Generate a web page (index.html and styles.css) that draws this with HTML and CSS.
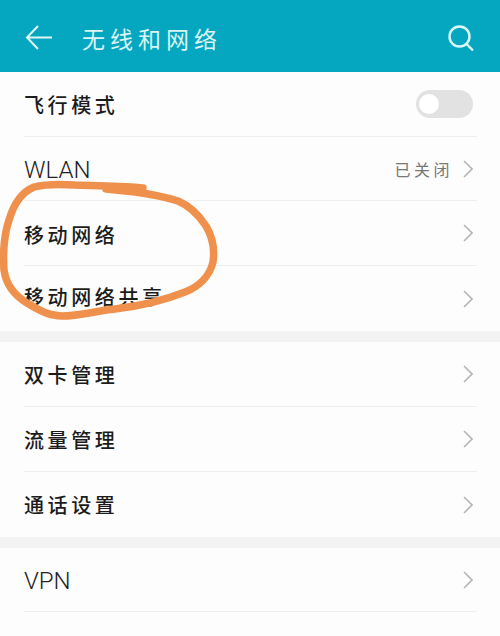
FILE: index.html
```html
<!DOCTYPE html>
<html lang="zh">
<head>
  <meta charset="UTF-8" />
  <title>无线和网络</title>
  <link rel="stylesheet" href="styles.css">
</head>
<body>
  <div class="header">
    <svg class="back-icon" width="28" height="28" viewBox="0 0 28 28">
      <path d="M13 2 L2 13.5 L13 25 M2 13.5 H27" />
    </svg>
    <div class="title">无线和网络</div>
    <svg class="search-icon" width="28" height="28" viewBox="0 0 28 28">
      <circle cx="12.5" cy="12.5" r="10" />
      <path d="M19.5 20 L26 26.5" />
    </svg>
  </div>

  <div class="group">
    <div class="row">
      <span class="label">飞行模式</span>
      <div class="toggle"><div class="knob"></div></div>
    </div>
    <div class="row tight">
      <span class="label latin">WLAN</span>
      <span class="value">已关闭</span>
      <svg class="chevron" width="10" height="18" viewBox="0 0 10 18"><path d="M1 1 L9 9 L1 17" /></svg>
    </div>
    <div class="row">
      <span class="label low">移动网络</span>
      <svg class="chevron" width="10" height="18" viewBox="0 0 10 18"><path d="M1 1 L9 9 L1 17" /></svg>
    </div>
    <div class="row">
      <span class="label high">移动网络共享</span>
      <svg class="chevron" width="10" height="18" viewBox="0 0 10 18"><path d="M1 1 L9 9 L1 17" /></svg>
    </div>
  </div>

  <div class="group">
    <div class="row">
      <span class="label">双卡管理</span>
      <svg class="chevron" width="10" height="18" viewBox="0 0 10 18"><path d="M1 1 L9 9 L1 17" /></svg>
    </div>
    <div class="row">
      <span class="label">流量管理</span>
      <svg class="chevron" width="10" height="18" viewBox="0 0 10 18"><path d="M1 1 L9 9 L1 17" /></svg>
    </div>
    <div class="row">
      <span class="label">通话设置</span>
      <svg class="chevron" width="10" height="18" viewBox="0 0 10 18"><path d="M1 1 L9 9 L1 17" /></svg>
    </div>
  </div>

  <div class="group last">
    <div class="row">
      <span class="label latin">VPN</span>
      <svg class="chevron" width="10" height="18" viewBox="0 0 10 18"><path d="M1 1 L9 9 L1 17" /></svg>
    </div>
  </div>

  <!-- hand drawn circle on top of the screenshot -->
  <svg class="scribble" width="500" height="636" viewBox="0 0 500 636">
    <path d="M143 188 C125 186 100 186 75 185 C60 184 45 184 34 187 C22 192 14 203 9 220 C4 235 3 255 4 270 C6 285 14 295 27 303 C40 311 50 316 62 316 C80 316 95 311 115 309 C140 306 165 300 185 292 C200 286 210 275 213 262 C215 248 212 236 206 226 C198 214 190 206 178 201 C165 197 150 194 135 192 L106 189" />
  </svg>
</body>
</html>
```

FILE: styles.css
```css
body, html {
  margin: 0;
  padding: 0;
  font-family: "Noto Sans CJK SC", "Liberation Sans", sans-serif;
  background: #fdfdfd;
}
body {
  position: relative;
  height: 636px;
  overflow: hidden;
}
.header {
  height: 72px;
  background: #05a7c0;
  box-sizing: border-box;
  display: flex;
  align-items: center;
  padding: 3px 25px 0 25px;
}
.back-icon path {
  fill: none;
  stroke: #e2f6f6;
  stroke-width: 2;
}
.title {
  flex: 1;
  margin-left: 29px;
  color: #d9f5f5;
  font-size: 23px;
  letter-spacing: 5px;
}
.search-icon circle, .search-icon path {
  fill: none;
  stroke: #dcf9f9;
  stroke-width: 2.4;
}
.group {
  border-bottom: 11px solid #f3f3f3;
}
.group.last {
  border-bottom: none;
}
.row {
  height: 64px;
  margin: 0 23px 0 24px;
  display: flex;
  align-items: center;
  border-bottom: 1px solid #eeeeee;
  padding-right: 4px;
}
.row.tight {
  height: 63px;
}
.group .row:last-child {
  border-bottom: none;
  height: 65px;
}
.group.last .row:last-child {
  border-bottom: 1px solid #eeeeee;
  height: 63px;
}
.label {
  flex: 1;
  font-size: 20px;
  font-weight: 500;
  letter-spacing: 3.6px;
  color: #1c1c1c;
}
.label.low {
  margin-top: 3px;
}
.label.high {
  margin-bottom: 4px;
}
.label.latin {
  font-family: Roboto, "Liberation Sans", sans-serif;
  font-size: 24px;
  font-weight: 300;
  letter-spacing: 0;
  color: #222222;
  margin-top: 2px;
}
.value {
  font-size: 16px;
  letter-spacing: 3.5px;
  color: #777777;
  margin-right: 10px;
}
.chevron path {
  fill: none;
  stroke: #b5b5b5;
  stroke-width: 1.6;
}
.toggle {
  width: 57px;
  height: 28px;
  border-radius: 14px;
  background: #e2e2e2;
  display: flex;
  align-items: center;
  padding-left: 3px;
  box-sizing: border-box;
}
.knob {
  width: 20px;
  height: 20px;
  border-radius: 50%;
  background: #ffffff;
}
.scribble {
  position: absolute;
  left: 0;
  top: 0;
}
.scribble path {
  fill: none;
  stroke: #ef914c;
  stroke-width: 7.5;
  stroke-linecap: round;
}
```
